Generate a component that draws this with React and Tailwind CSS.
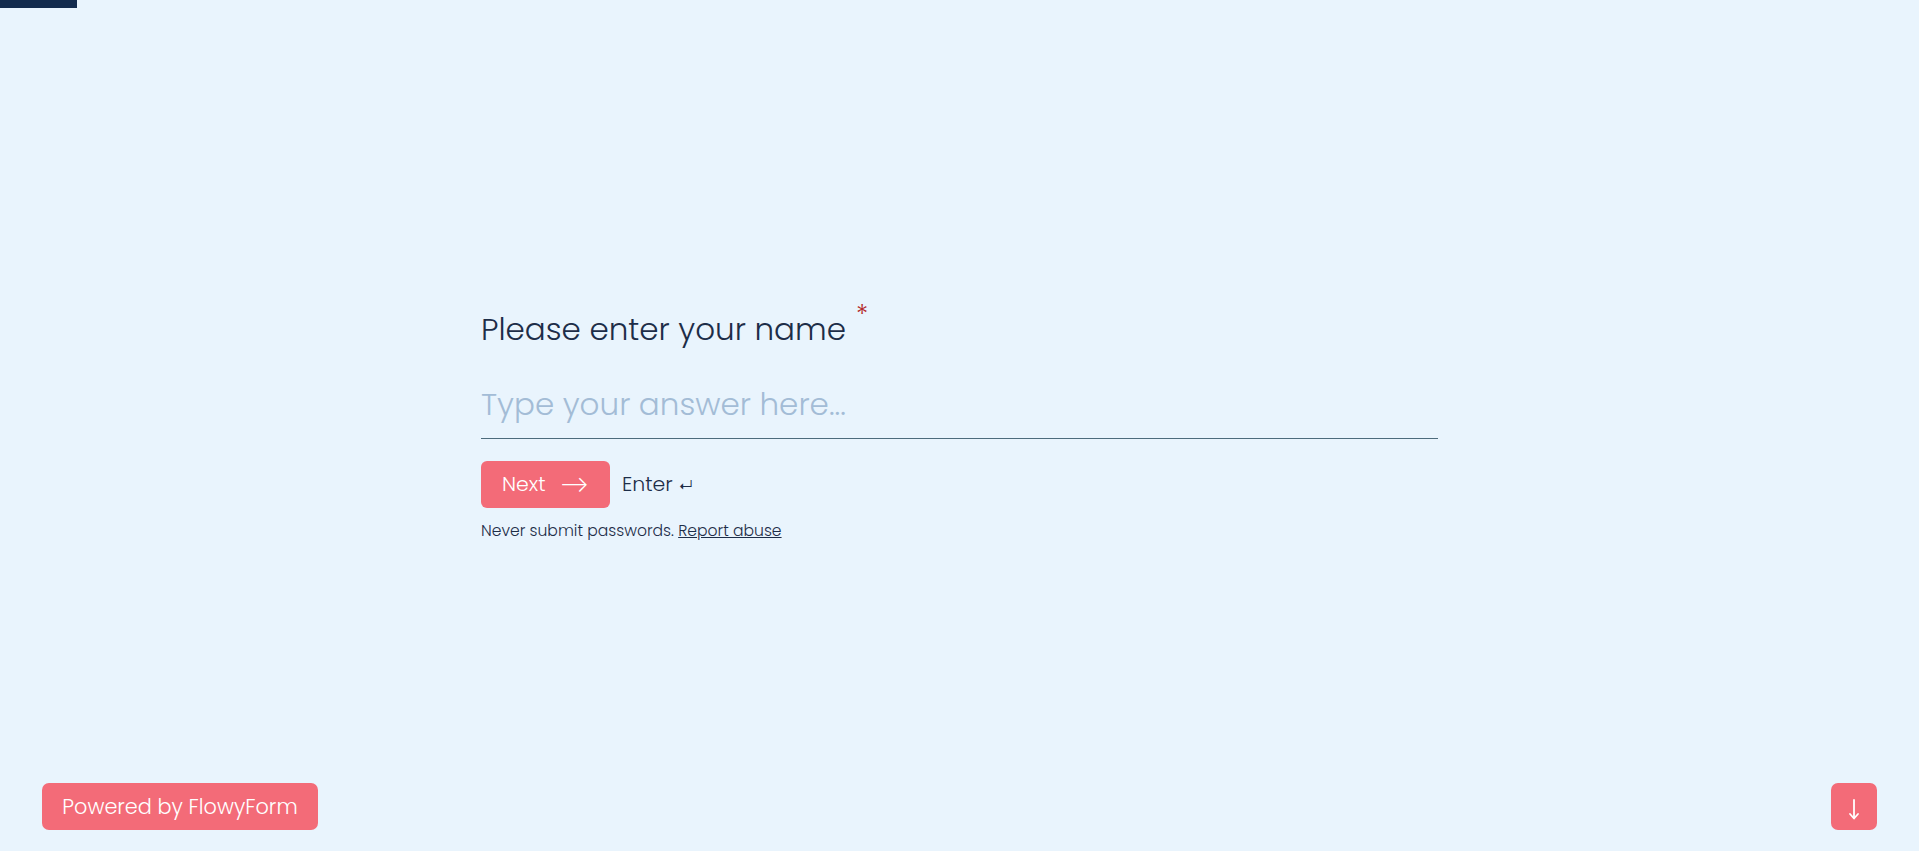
export default function App() {
  const font = { fontFamily: '"Poppins", "Inter", "Noto Sans", sans-serif' };
  return (
    <div className="relative h-[851px] w-full overflow-hidden bg-[#e9f4fd]" style={font}>
      <div className="absolute left-0 top-0 h-[8px] w-[77px] bg-[#132b4e]" />
      <div className="flex h-full items-center justify-center">
        <div className="w-[957px] pb-[9px] pt-[10px]">
          <div className="relative flex items-start">
            <h1 className="text-[31px] font-light leading-[40px] text-[#1d2d48]">
              Please enter your name
            </h1>
            <span className="ml-[10px] mt-[-13px] text-[26px] font-light text-[#b52c2c]">*</span>
          </div>
          <div className="mt-[35px] border-b-[1.5px] border-[#4d6b7c] pb-[14px]">
            <div className="text-[31px] font-light leading-[40px] text-[#a3bcd6]">
              Type your answer here...
            </div>
          </div>
          <div className="mt-[22px] flex items-center gap-[12px]">
            <button className="flex h-[47px] w-[129px] items-center justify-center gap-[14px] rounded-[6px] bg-[#f36b78] text-[20.5px] font-light text-white">
              <span>Next</span>
              <span className="text-[22px] leading-none">⟶</span>
            </button>
            <span className="text-[20.5px] font-light text-[#1d2d48]">
              Enter <span className="text-[15px]">↵</span>
            </span>
          </div>
          <div className="mt-[11px] text-[15.6px] font-light text-[#1d2d48]">
            Never submit passwords. <a className="underline">Report abuse</a>
          </div>
        </div>
      </div>
      <button className="absolute bottom-[21px] left-[42px] flex h-[47px] w-[276px] items-center justify-center rounded-[7px] bg-[#f36b78] text-[20.8px] font-light text-white">
        Powered by FlowyForm
      </button>
      <button className="absolute bottom-[21px] left-[1831px] flex h-[47px] w-[46px] items-center justify-center rounded-[7px] bg-[#f36b78] text-white">
        <svg width="12" height="22" viewBox="0 0 12 22" fill="none" stroke="currentColor" strokeWidth="1.8" strokeLinecap="round" strokeLinejoin="round" className="mt-[6px]">
          <path d="M6 1 V19" />
          <path d="M2 15 L6 19.5 L10 15" />
        </svg>
      </button>
    </div>
  );
}
